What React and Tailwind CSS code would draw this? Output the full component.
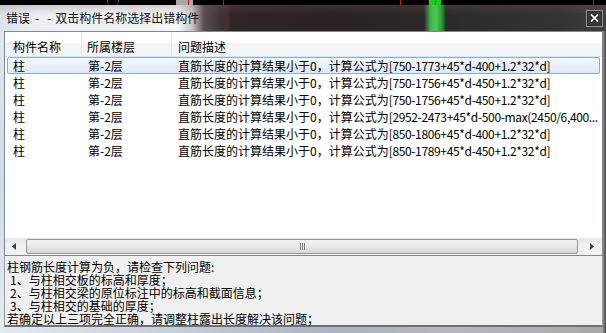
const rows = [
  "[750-1773+45*d-400+1.2*32*d]",
  "[750-1756+45*d-450+1.2*32*d]",
  "[750-1756+45*d-450+1.2*32*d]",
  "[2952-2473+45*d-500-max(2450/6,400...",
  "[850-1806+45*d-400+1.2*32*d]",
  "[850-1789+45*d-450+1.2*32*d]",
];

const hints = [
  { text: "柱钢筋长度计算为负，请检查下列问题:", indent: false },
  { text: "1、与柱相交板的标高和厚度；", indent: true },
  { text: "2、与柱相交梁的原位标注中的标高和截面信息；", indent: true },
  { text: "3、与柱相交的基础的厚度；", indent: true },
  { text: "若确定以上三项完全正确，请调整柱露出长度解决该问题；", indent: false },
];

const CloseGlyph = () => (
  <svg width="9" height="8" viewBox="0 0 9 8">
    <path d="M1.5 1 L7.5 7 M7.5 1 L1.5 7" stroke="#111" strokeWidth="3.6" strokeLinecap="square" />
    <path d="M1.5 1 L7.5 7 M7.5 1 L1.5 7" stroke="#fff" strokeWidth="1.8" strokeLinecap="square" />
  </svg>
);

const Arrow = ({ dir }) => (
  <svg width="4" height="7" viewBox="0 0 4 7">
    {dir === "left" ? <path d="M4 0 L0 3.5 L4 7 Z" fill="#404040" /> : <path d="M0 0 L4 3.5 L0 7 Z" fill="#404040" />}
  </svg>
);

export default function App() {
  return (
    <div className="relative flex h-[333px] w-[606px] flex-col overflow-hidden bg-[#5a5a5a] font-['Noto_Sans_CJK_SC',sans-serif] text-[12px] text-black">
      {/* desktop strip behind the glass */}
      <div className="relative h-[5px] bg-black">
        <span className="absolute left-[107px] top-0 h-[5px] w-[12px] rounded-b-sm border-x border-[#3b5b3b]" />
        <span className="absolute left-[176px] top-0 h-[5px] w-[17px] bg-[#a8a8a8]" />
        <span className="absolute left-[188px] top-0 h-[5px] w-px bg-[#e01010]" />
        <span className="absolute left-[223px] top-0 h-[5px] w-px bg-[#d01010]" />
        <span className="absolute left-[400px] top-0 h-[5px] w-px bg-[#d01010]" />
        <span className="absolute left-[429px] top-0 h-[5px] w-[12px] bg-[#19d119]" />
        <span className="absolute left-[435px] top-0 h-[5px] w-px bg-[#0a5a0a]" />
        <span className="absolute left-[593px] top-0 h-[5px] w-px bg-[#d01010]" />
      </div>

      {/* title bar */}
      <div className="relative flex h-[26px] items-center justify-between bg-[linear-gradient(90deg,#dbe4eb_0px,#eceff1_40px,#f1f1f1_150px,#f6f6f6_178px,#c9c6c7_192px,#5a4e50_204px,#2f2426_230px,#2a2224_330px,#2b2627_420px,#2c2c2c_460px,#333333_560px,#3f3f3f_606px)] pr-[3px]">
        <div className="pointer-events-none absolute inset-0 bg-[linear-gradient(180deg,rgba(120,90,95,0.25)_0px,rgba(0,0,0,0)_10px)]" />
        <div className="pointer-events-none absolute left-[222px] top-0 h-full w-[10px] bg-[linear-gradient(90deg,rgba(110,50,50,0),rgba(110,50,50,0.45),rgba(110,50,50,0))]" />
        <div className="pointer-events-none absolute left-[424px] top-0 h-full w-[22px] bg-[linear-gradient(90deg,rgba(40,140,45,0),#3cb944_30%,#4cc953_55%,#2f9a36_80%,rgba(40,140,45,0))]" />
        <div className="relative flex items-center whitespace-nowrap pl-[6px] leading-[16px] text-[#111]">
          <span>错误</span>
          <span className="ml-[5px]">-</span>
          <span className="ml-[8px]">-</span>
          <span className="ml-[4px]">双击构件名称选择出错构件</span>
        </div>
        <div className="relative flex h-[17px] w-[17px] items-center justify-center border border-[#9a9a9a] bg-[#3a3a3a] shadow-[inset_0_0_0_1px_#2a2a2a]">
          <CloseGlyph />
        </div>
      </div>

      {/* body */}
      <div className="flex flex-1">
        <div className="w-[4px] bg-[linear-gradient(180deg,#dfe8f0,#cfdbe7_50%,#e4ebf2)]" />
        <div className="flex w-[599px] flex-col">
          {/* list view */}
          <div className="flex h-[225px] flex-col border border-[#828790] bg-white">
            <div className="flex h-[25px] border-b border-[#e2e3e5] bg-[linear-gradient(180deg,#ffffff_0%,#ffffff_45%,#f3f4f6_48%,#f3f4f6_100%)] leading-[25px]">
              <div className="w-[77px] border-r border-[#e3e6ea] pl-[8px] pt-[2px]">构件名称</div>
              <div className="w-[90px] border-r border-[#e3e6ea] pl-[5px] pt-[2px]">所属楼层</div>
              <div className="flex-1 pl-[6px] pt-[2px]">问题描述</div>
            </div>
            <div className="flex flex-1 flex-col">
              {rows.map((r, i) => (
                <div
                  key={i}
                  className={`flex h-[17px] items-center leading-[17px] ${
                    i === 0
                      ? "mx-[2px] rounded-[2px] border border-[#84acdd] bg-[linear-gradient(180deg,#f4f8fd,#dfe9f7)]"
                      : "mx-[2px] border border-transparent"
                  }`}
                >
                  <div className="w-[74px] pl-[5px]">柱</div>
                  <div className="w-[90px] pl-[6px]">第-2层</div>
                  <div className="flex-1 overflow-hidden whitespace-nowrap pl-[6px]">
                    直筋长度的计算结果小于0，计算公式为<span className="tracking-[-0.35px]">{r}</span>
                  </div>
                </div>
              ))}
            </div>
            {/* horizontal scrollbar */}
            <div className="flex h-[17px] items-center bg-[linear-gradient(180deg,#e6e6e6,#f1f1f1_40%,#f1f1f1)]">
              <div className="flex h-[17px] w-[17px] items-center justify-center">
                <Arrow dir="left" />
              </div>
              <div className="ml-[4px] flex h-[15px] w-[552px] items-center justify-center rounded-[2px] border border-[#969696] bg-[linear-gradient(180deg,#f5f5f5,#e8e8e8_50%,#d6d6d6)]">
                <div className="flex gap-[1px]">
                  <span className="h-[7px] w-px bg-[#7d7d7d]" />
                  <span className="h-[7px] w-px bg-[#7d7d7d]" />
                  <span className="h-[7px] w-px bg-[#7d7d7d]" />
                </div>
              </div>
              <div className="ml-auto flex h-[17px] w-[20px] items-center justify-center">
                <Arrow dir="right" />
              </div>
            </div>
          </div>

          {/* hint panel */}
          <div className="h-[71px] border-x border-b-2 border-x-[#9a9a9a] border-b-[#6f6f6f] bg-[#f0f0f0] pl-[2px] pt-[4px] leading-[13px]">
            {hints.map((h, i) => (
              <div key={i} className={h.indent ? "pl-[3px]" : ""}>
                {h.text}
              </div>
            ))}
          </div>
          <div className="flex-1 bg-[linear-gradient(90deg,#e3e9f0,#c9d1dc_25%,#aab4c2_55%,#b9b5bd_75%,#a8a8a8)]" />
        </div>
        <div className="w-[3px] bg-[linear-gradient(90deg,#8a8a8a,#4a4a4a)]" />
      </div>
    </div>
  );
}
